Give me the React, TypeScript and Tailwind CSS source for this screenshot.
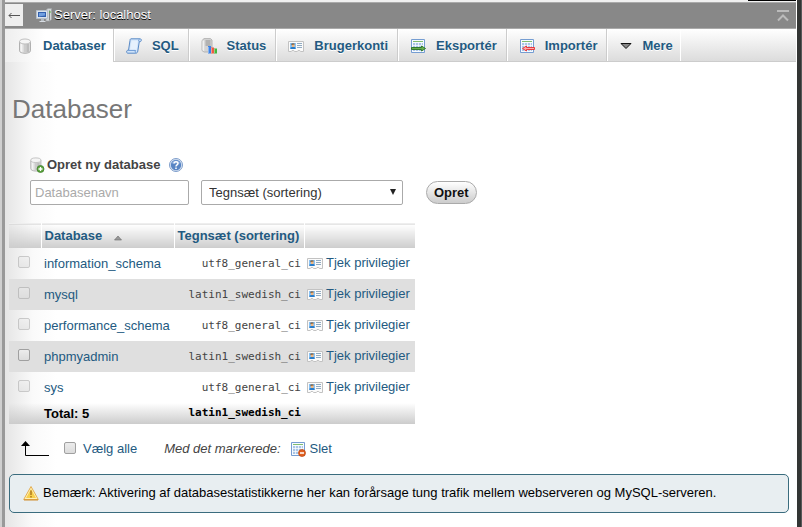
import type { ComponentType, ReactNode } from 'react';

type IconProps = { className?: string };

function Svg({ className = '', children }: IconProps & { children: ReactNode }) {
  return (
    <svg className={`h-4 w-4 shrink-0 ${className}`} viewBox="0 0 16 16" fill="none" aria-hidden="true">
      {children}
    </svg>
  );
}

function Cylinder() {
  return (
    <>
      <path d="M2.500 3.500v9.300c0 1.400 2.400 2.500 5.500 2.500s5.500-1.100 5.500-2.500V3.500z" fill="#dcdcdc" stroke="#b0b0b0" />
      <path d="M3.400 5.500h2v8.900c-1.200-.4-2-.9-2-1.600z" fill="#f4f4f4" />
      <path d="M7 6h2.500v8.700H7z" fill="#cccccc" />
      <path d="M9.500 6h2.600v7.700l-2.600.9z" fill="#bcbcbc" />
      <ellipse cx="8" cy="3.500" rx="5.500" ry="2.500" fill="#f5f5f5" stroke="#c0c0c0" />
    </>
  );
}

function DatabaseIcon({ className }: IconProps) {
  return (
    <Svg className={className}>
      <Cylinder />
    </Svg>
  );
}

function DatabaseAddIcon({ className }: IconProps) {
  return (
    <Svg className={className}>
      <g transform="translate(-1.5 0) scale(.92)">
        <Cylinder />
      </g>
      <circle cx="10.500" cy="12" r="3.500" fill="#5ba33d" stroke="#3a7a25" strokeWidth=".7" />
      <path d="M10.500 10v4M8.500 12h4" stroke="#fff" strokeWidth="1.300" />
    </Svg>
  );
}

function SqlIcon({ className }: IconProps) {
  return (
    <Svg className={className}>
      <path
        d="M5 .8h9c1.200 0 1.500 1 1.200 2-.2.8-1 .9-1.900.8L11.800 13c-.2 1.300-.8 2.200-2 2.200H2c-1.200 0-1.700-1-1.200-2.200.2-.6.6-.7 1.700-.7L4 2.500C4.100 1.500 4.300.8 5 .8z"
        fill="#cfe3f9"
        stroke="#5a8ac6"
      />
      <path d="M5.500 2.500h6.500l-1.500 9.500H4z" fill="#e6f1fd" />
      <path d="M13.300 3.500c-.9-.1-.9-1.500 0-2.200M2.500 12.400h7c-.4.900-.4 2 .3 2.500" stroke="#6a99d4" />
    </Svg>
  );
}

function StatusIcon({ className }: IconProps) {
  return (
    <Svg className={className}>
      <path d="M3 .6h6.400L11 2v12H3L1 12.500v-10z" fill="#d4d4d4" stroke="#a8a8a8" strokeWidth=".8" />
      <path d="M1.500 2.600h1.700v11L1.500 12.300z" fill="#efefef" />
      <path d="M4.500 3h5M4.500 5h5M4.500 7h5" stroke="#909090" />
      <path d="M7 8h3v7.500H7z" fill="#3b82e6" />
      <path d="M10 9.500h3v6h-3z" fill="#ef5a45" />
      <path d="M13 10.500h3v5h-3z" fill="#45b53d" />
      <path d="M7.500 9v6M10.500 10v5M13.500 11v4" stroke="#ffffff" strokeOpacity=".4" />
    </Svg>
  );
}

function UserCardIcon({ className }: IconProps) {
  return (
    <Svg className={className}>
      <path d="M.5 3.500h15v10h-3l-.7-1H10l-.7 1H6.500l-.7-1H4l-.7 1H.5z" fill="#fbfbfb" stroke="#c2c2c2" />
      <path d="M2 5h6v6H2z" fill="#8cc4f5" />
      <path d="M4 6h2.500v3H4z" fill="#efb780" />
      <path d="M3.500 7.500V5.500H6.500V6.500H4.500z" fill="#684421" />
      <path d="M2.500 11V9.500L4 9h2.500l1 .8V11z" fill="#287bc8" />
      <path d="M9 5.500h5M9 7.500h5M9 9.500h5" stroke="#91abc2" />
    </Svg>
  );
}

function Sheet() {
  return (
    <>
      <path d="M1.500 1.500h13v13h-13z" fill="#f7fbff" stroke="#759dd2" />
      <path d="M3 3.500h10" stroke="#81bd70" />
      <path d="M3 5h10v8H3z" fill="#a9c5e6" />
      <path d="M3 7.500h10M3 10.500h10M5.500 5v8M8.500 5v8M11.500 5v8" stroke="#fff" strokeOpacity=".7" />
    </>
  );
}

function ExportIcon({ className }: IconProps) {
  return (
    <Svg className={className}>
      <Sheet />
      <path d="M1.500 9.500h10V8l4 2.500-4 2.500v-1.500h-10z" fill="#6aae4c" stroke="#277322" strokeWidth=".9" />
    </Svg>
  );
}

function ImportIcon({ className }: IconProps) {
  return (
    <Svg className={className}>
      <Sheet />
      <path d="M15.500 9.500H7.500V8l-4 2.500 4 2.500v-1.500h8z" fill="#ffaaa7" stroke="#e62d32" strokeWidth=".9" />
    </Svg>
  );
}

function MoreIcon({ className }: IconProps) {
  return (
    <Svg className={className}>
      <path d="M3 5.500h10L8 10.500z" fill="#888" stroke="#111" />
    </Svg>
  );
}

function DeleteIcon({ className }: IconProps) {
  return (
    <Svg className={className}>
      <Sheet />
      <circle cx="12" cy="12" r="3.500" fill="#e16020" stroke="#b84612" strokeWidth=".7" />
      <path d="M10 12h4" stroke="#fff" strokeWidth="1.500" />
    </Svg>
  );
}

function ServerIcon({ className }: IconProps) {
  return (
    <Svg className={className}>
      <path d="M10 2l2-1.500h3.500v11L13.500 13H10z" fill="#d2d5d7" stroke="#a1a5a8" strokeWidth=".7" />
      <path d="M13.500 2.500v10" stroke="#85898c" />
      <path d="M13 4h2" stroke="#58bd42" />
      <path d="M.5 2.500h11v8H.5z" fill="#dbe3ec" stroke="#b5bfca" />
      <path d="M2 4h8v5H2z" fill="#315fae" />
      <path d="M3 5h6v2.500L3 8.500z" fill="#709fe0" />
      <path d="M5 11h3v2H5z" fill="#b4bac0" />
      <path d="M3.500 13.500h6" stroke="#d7dce2" />
    </Svg>
  );
}

function HelpIcon({ className }: IconProps) {
  return (
    <Svg className={className}>
      <circle cx="8" cy="8" r="6.500" fill="#dbe6f5" stroke="#7f9ecb" />
      <circle cx="8" cy="8" r="5.200" fill="#5885c4" />
      <path d="M3.500 6.500C4.500 2.500 11 2.500 12.500 6.500z" fill="#83a7da" />
      <path d="M6 6.500c.1-2.500 4-2.500 4 0 0 1.500-2 1.300-2 3M8 10.600v1.500" stroke="#fff" strokeWidth="1.500" />
    </Svg>
  );
}

function WarningIcon({ className }: IconProps) {
  return (
    <Svg className={className}>
      <path d="M8 1.500.7 14.500h14.600z" fill="#fff1b8" stroke="#e3ad50" strokeLinejoin="round" />
      <path d="M8 4 3 13h10z" fill="#f7cf4c" />
      <path d="M8 5.500V10M8 11v1.500" stroke="#b07c22" strokeWidth="1.500" />
      <path d="M1 15h14" stroke="#cf8d31" />
    </Svg>
  );
}

const tabs: { label: string; Icon: ComponentType<IconProps> }[] = [
  { label: 'Databaser', Icon: DatabaseIcon },
  { label: 'SQL', Icon: SqlIcon },
  { label: 'Status', Icon: StatusIcon },
  { label: 'Brugerkonti', Icon: UserCardIcon },
  { label: 'Eksportér', Icon: ExportIcon },
  { label: 'Importér', Icon: ImportIcon },
  { label: 'Mere', Icon: MoreIcon },
];

const databases = [
  { name: 'information_schema', collation: 'utf8_general_ci', locked: true },
  { name: 'mysql', collation: 'latin1_swedish_ci', locked: true },
  { name: 'performance_schema', collation: 'utf8_general_ci', locked: true },
  { name: 'phpmyadmin', collation: 'latin1_swedish_ci', locked: false },
  { name: 'sys', collation: 'utf8_general_ci', locked: true },
];

const checkbox =
  'block h-3 w-3 shrink-0 appearance-none rounded-xs border border-[#a0a0a0] bg-linear-to-b from-[#ececec] to-[#dcdcdc] checked:bg-[#235a81] disabled:opacity-50';
const mono = "font-['DejaVu_Sans_Mono','Liberation_Mono',monospace] text-[11px]";
const headCell = 'border-r border-white bg-linear-to-b from-white/0 to-[#cccccc] p-0 px-[3px] text-left';

export default function App() {
  return (
    <div className="flex min-h-screen bg-white font-['Liberation_Sans',Arial,sans-serif] text-[13px] leading-4 text-[#444]">
      <div className="w-[5px] shrink-0 border-r-[3px] border-[#999] bg-[#cfcfcf]" />
      <div className="min-w-0 flex-1 border-r border-white bg-linear-to-r from-[#e5e5e5] via-[#fafafa] via-[28px] to-white to-[52px]">
        <div className="flex h-[3px] justify-end border-b border-[#aaa] bg-[#f0f0f0]">
          <div className="h-px w-12 bg-black" />
        </div>
        <header className="flex h-[25px] items-center bg-[#888]">
          <button type="button" aria-label="Skjul panel" className="mb-px flex h-[22px] w-[18px] items-center justify-center bg-[#eee]">
            <svg className="h-3 w-3" viewBox="0 0 12 12" fill="none" stroke="#555" aria-hidden="true">
              <path d="M12 6.500H1M3.500 4L1 6.500 3.500 9" />
            </svg>
          </button>
          <ServerIcon className="ml-[13px]" />
          <a href="#server" className="ml-0.5 pb-px text-white [text-shadow:0_1px_0_#000]">
            Server: localhost
          </a>
          <button type="button" aria-label="Til toppen" className="mr-[7px] ml-auto">
            <svg className="h-3 w-3" viewBox="0 0 12 12" fill="none" stroke="#bbb" strokeWidth="2" aria-hidden="true">
              <path d="M0 1h12M1 10.500l5-5 5 5" />
            </svg>
          </button>
        </header>

        <nav className="flex h-[34px] border-t border-b border-t-[#aaa] border-b-[#ccc] bg-linear-to-b from-white to-[#dcdcdc]">
          {tabs.map(({ label, Icon }, i) => (
            <a
              key={label}
              href={`#${label}`}
              className={`flex items-center border-r pt-px font-bold whitespace-nowrap text-[#235a81] [text-shadow:0_1px_0_#fff] ${
                i === 0
                  ? '-mb-px gap-[10px] border-[#ccc] bg-linear-to-r from-[#eee] to-white to-[40px] pr-[7px] pl-3'
                  : i === tabs.length - 1
                    ? 'gap-2 border-l border-l-white border-r-white pr-[7px] pl-[10px]'
                    : 'gap-[10px] border-l border-l-white border-r-[#ccc] pr-[9px] pl-[11px]'
              }`}
            >
              <Icon />
              {label}
            </a>
          ))}
        </nav>

        <main className="pr-[7px] pl-1">
          <h1 className="mt-[31px] ml-[3px] text-[26px] leading-8 text-[#777]">Databaser</h1>

          <form className="mt-8 ml-[21px]" onSubmit={(e) => e.preventDefault()}>
            <div className="flex h-4 items-center">
              <label htmlFor="db-name" className="flex items-center gap-px font-bold">
                <DatabaseAddIcon />
                Opret ny database
              </label>
              <a href="#help" aria-label="Dokumentation" className="ml-2">
                <HelpIcon />
              </a>
            </div>
            <div className="mt-[7px] flex h-[25px] items-center">
              <input
                id="db-name"
                type="text"
                placeholder="Databasenavn"
                className="h-full w-[159px] rounded-xs border border-[#aaa] bg-white px-1 placeholder:text-[#aaa]"
              />
              <div className="relative ml-3 h-full w-[202px]">
                <select
                  aria-label="Tegnsæt (sortering)"
                  className="h-full w-full appearance-none rounded-xs border border-[#aaa] bg-white px-[7px] text-[#333]"
                >
                  <option>Tegnsæt (sortering)</option>
                </select>
                <svg className="pointer-events-none absolute top-2 right-[6px] h-2 w-2" viewBox="0 0 8 8" aria-hidden="true">
                  <path d="M1 1h6L4 7z" fill="#222" />
                </svg>
              </div>
              <button
                type="submit"
                className="ml-[23px] h-[23px] rounded-full border border-[#aaa] bg-linear-to-b from-white to-[#ccc] px-[7px] font-bold text-[#111]"
              >
                Opret
              </button>
            </div>
          </form>

          <table className="mt-[18px] w-[406px] table-fixed border-collapse">
            <colgroup>
              <col className="w-8" />
              <col className="w-[133px]" />
              <col className="w-[130px]" />
              <col className="w-[111px]" />
            </colgroup>
            <thead>
              <tr className="h-6 border-t border-[#eee] text-[#235a81]">
                <th className={headCell} />
                <th className={headCell}>
                  <a href="#sort" className="flex items-center gap-3">
                    Database
                    <svg className="mt-1 h-2 w-2" viewBox="0 0 8 8" aria-hidden="true">
                      <path d="M4 2l3.500 4h-7z" fill="#999" stroke="#666" strokeWidth=".6" />
                    </svg>
                  </a>
                </th>
                <th className={headCell}>
                  <a href="#collation" className="whitespace-nowrap">Tegnsæt (sortering)</a>
                </th>
                <th className={headCell} />
              </tr>
            </thead>
            <tbody>
              {databases.map((db) => (
                <tr key={db.name} className="h-[31px] even:bg-[#dfdfdf]">
                  <td className="p-0 pb-[2px] pl-[9px]">
                    <input type="checkbox" aria-label={db.name} disabled={db.locked} className={checkbox} />
                  </td>
                  <td className="p-0 pt-px pl-[3px]">
                    <a href={`#${db.name}`} className="text-[#235a81]">{db.name}</a>
                  </td>
                  <td className={`p-0 pt-px pr-[3px] text-right ${mono}`}>{db.collation}</td>
                  <td className="p-0 pl-[3px]">
                    <a href="#privileges" className="flex items-center gap-[3px] whitespace-nowrap text-[#235a81]">
                      <UserCardIcon />
                      Tjek privilegier
                    </a>
                  </td>
                </tr>
              ))}
            </tbody>
            <tfoot>
              <tr className="h-[21px] bg-linear-to-b from-white/0 to-[#cccccc] font-bold text-black">
                <td className="p-0" />
                <td className="p-0 pt-px pl-[3px]">Total: 5</td>
                <td className={`p-0 pr-[3px] text-right ${mono}`}>latin1_swedish_ci</td>
                <td className="p-0" />
              </tr>
            </tfoot>
          </table>

          <div className="mt-[17px] ml-3 flex h-4 items-center">
            <svg className="h-4 w-7" viewBox="0 0 28 16" fill="none" aria-hidden="true">
              <path d="M4.500 2v12.500H28" stroke="#000" />
              <path d="M4.500 0L9 5H0z" fill="#000" />
            </svg>
            <label className="ml-[15px] flex items-center gap-[7px] text-[#235a81]">
              <input type="checkbox" className={`mb-[2px] ${checkbox}`} />
              Vælg alle
            </label>
            <em className="ml-[27px]">Med det markerede:</em>
            <button type="button" className="ml-[9px] flex items-center gap-1 text-[#235a81]">
              <DeleteIcon />
              Slet
            </button>
          </div>

          <div className="mt-[17px] flex min-h-[39px] items-center gap-1 rounded-[5px] border border-[#3a6c7e] bg-[#e8eef1] px-[13px] text-black">
            <WarningIcon />
            <p className="pb-px">Bemærk: Aktivering af databasestatistikkerne her kan forårsage tung trafik mellem webserveren og MySQL-serveren.</p>
          </div>
        </main>
      </div>
      <div className="w-[5px] shrink-0 border-r border-[#57595a] bg-[#333534]" />
    </div>
  );
}
